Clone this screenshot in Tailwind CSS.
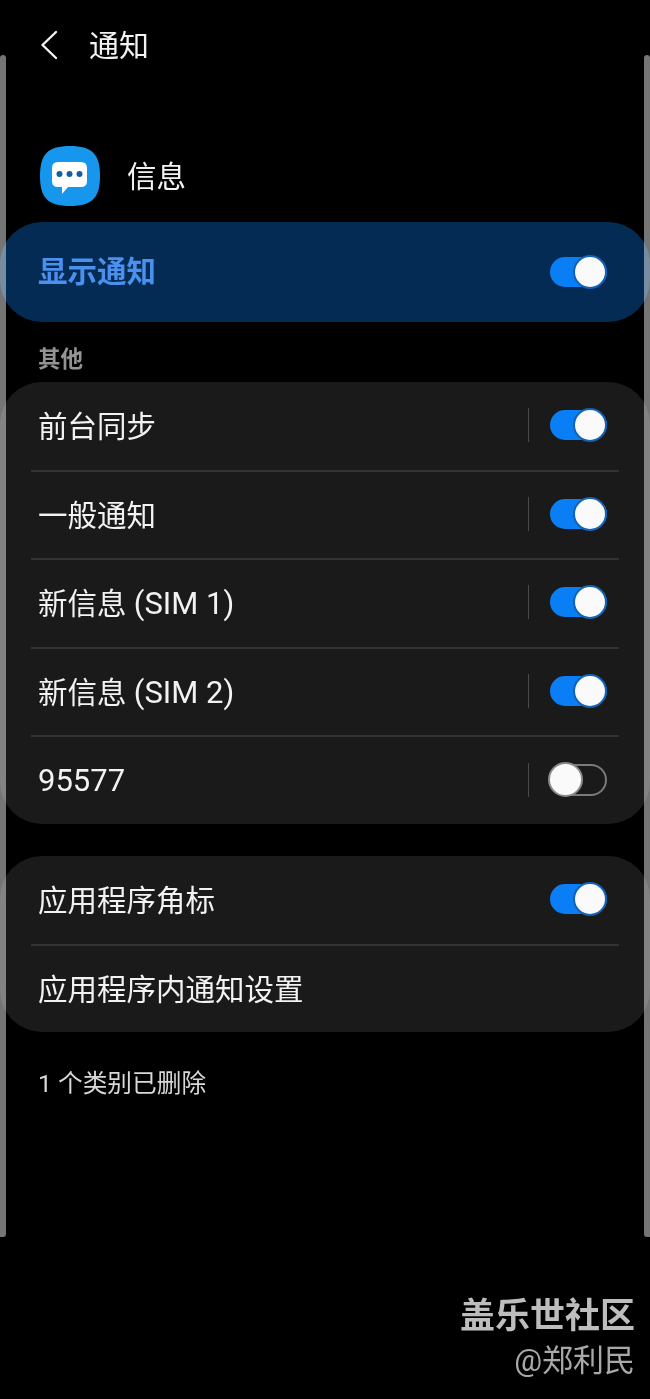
<!DOCTYPE html>
<html lang="zh-CN">
<head>
<meta charset="utf-8" />
<title>通知</title>
<script src="https://cdn.jsdelivr.net/npm/@tailwindcss/browser@4"></script>
</head>
<body class="bg-black">
<div class="relative w-[650px] h-[1399px] overflow-hidden bg-black text-[#f2f2f2] font-['Roboto','Noto_Sans_CJK_SC',sans-serif]">

  <!-- edge bars, the lists screen-blend over them -->
  <div class="absolute left-0 top-[55px] w-[6px] h-[1182px] rounded-t-[3px] rounded-br-[3px] bg-[#757575]"></div>
  <div class="absolute right-0 top-[55px] w-[6px] h-[1182px] rounded-t-[3px] rounded-bl-[3px] bg-[#757575]"></div>

  <!-- header -->
  <header class="flex items-center h-[90px] pl-[40px]">
    <svg class="w-[18px] h-[30px]" viewBox="0 0 18 30" fill="none" stroke="#f2f2f2" stroke-width="2.4" stroke-linecap="round" stroke-linejoin="round"><path d="M16 2 L2.5 15 L16 28"/></svg>
    <h1 class="ml-[31px] pt-[2px] text-[30px] leading-none font-normal">通知</h1>
  </header>

  <!-- app row -->
  <div class="flex items-center h-[60px] mt-[56px] pl-[40px]">
    <svg class="w-[60px] h-[60px]" viewBox="0 0 60 60">
      <path d="M30 0 C52 0 60 8 60 30 C60 52 52 60 30 60 C8 60 0 52 0 30 C0 8 8 0 30 0 Z" fill="#1796ee"/>
      <path d="M18 16 H41 Q47 16 47 22 V35 Q47 41 41 41 H28 L22 48 V41 H18 Q12 41 12 35 V22 Q12 16 18 16 Z" fill="#fff"/>
      <circle cx="19.5" cy="28" r="3" fill="#14609f"/>
      <circle cx="29.5" cy="28" r="3" fill="#14609f"/>
      <circle cx="39.5" cy="28" r="3" fill="#14609f"/>
    </svg>
    <span class="ml-[27px] pt-[4px] text-[29.5px] leading-none">信息</span>
  </div>

  <!-- master switch -->
  <div class="mix-blend-screen flex items-center justify-between h-[100px] mt-[16px] pl-[38px] pr-[43px] rounded-[42px] bg-[#032b53]">
    <span class="text-[29.5px] leading-none font-bold text-[#4a90ee] mt-[2px]">显示通知</span>
    <div class="flex items-center justify-end w-[57px] h-[30px] rounded-full bg-[#0a7ff5]">
      <div class="w-[34px] h-[34px] shrink-0 rounded-full bg-[#fafafa] border-2 border-[#1262b8]"></div>
    </div>
  </div>

  <h2 class="pl-[38px] mt-[25px] text-[22.5px] leading-[24px] font-bold text-[#949494]">其他</h2>

  <!-- channel list -->
  <section class="mix-blend-screen mt-[11px] rounded-[42px] bg-[#1a1a1a] px-[31px]">
    <div class="flex items-center h-[89.5px] pb-[2px] border-b-2 border-[#333333]">
      <span class="flex-1 pl-[7px] pt-[6px] text-[29.5px] leading-none">前台同步</span>
      <div class="w-[1px] h-[34px] bg-[#4a4a4a] mr-[21px]"></div>
      <div class="flex items-center justify-end w-[57px] h-[30px] mr-[12px] rounded-full bg-[#0a7ff5]">
        <div class="w-[34px] h-[34px] shrink-0 rounded-full bg-[#fafafa] border-2 border-[#1262b8]"></div>
      </div>
    </div>
    <div class="flex items-center h-[88.5px] pb-[2px] border-b-2 border-[#333333]">
      <span class="flex-1 pl-[7px] pt-[6px] text-[29.5px] leading-none">一般通知</span>
      <div class="w-[1px] h-[34px] bg-[#4a4a4a] mr-[21px]"></div>
      <div class="flex items-center justify-end w-[57px] h-[30px] mr-[12px] rounded-full bg-[#0a7ff5]">
        <div class="w-[34px] h-[34px] shrink-0 rounded-full bg-[#fafafa] border-2 border-[#1262b8]"></div>
      </div>
    </div>
    <div class="flex items-center h-[88.5px] pb-[2px] border-b-2 border-[#333333]">
      <span class="flex-1 pl-[7px] pt-[3px] text-[29.5px] leading-none">新信息 <span class="text-[31px]">(SIM 1)</span></span>
      <div class="w-[1px] h-[34px] bg-[#4a4a4a] mr-[21px]"></div>
      <div class="flex items-center justify-end w-[57px] h-[30px] mr-[12px] rounded-full bg-[#0a7ff5]">
        <div class="w-[34px] h-[34px] shrink-0 rounded-full bg-[#fafafa] border-2 border-[#1262b8]"></div>
      </div>
    </div>
    <div class="flex items-center h-[88.5px] pb-[2px] border-b-2 border-[#333333]">
      <span class="flex-1 pl-[7px] pt-[4px] text-[29.5px] leading-none">新信息 <span class="text-[31px]">(SIM 2)</span></span>
      <div class="w-[1px] h-[34px] bg-[#4a4a4a] mr-[21px]"></div>
      <div class="flex items-center justify-end w-[57px] h-[30px] mr-[12px] rounded-full bg-[#0a7ff5]">
        <div class="w-[34px] h-[34px] shrink-0 rounded-full bg-[#fafafa] border-2 border-[#1262b8]"></div>
      </div>
    </div>
    <div class="flex items-center h-[87px] pb-[2px]">
      <span class="flex-1 pl-[7px] pt-[2px] text-[31px] leading-none">95577</span>
      <div class="w-[1px] h-[34px] bg-[#4a4a4a] mr-[20px]"></div>
      <div class="flex items-center justify-start w-[58px] h-[32px] mr-[12px] rounded-full border-2 border-[#7a7a7a]">
        <div class="w-[35px] h-[35px] shrink-0 -ml-[3px] rounded-full bg-[#fafafa] border-2 border-[#8a8a8a]"></div>
      </div>
    </div>
  </section>

  <!-- app level settings -->
  <section class="mix-blend-screen mt-[32px] rounded-[42px] bg-[#1a1a1a] px-[31px]">
    <div class="flex items-center h-[90px] pb-[3px] border-b-2 border-[#333333]">
      <span class="flex-1 pl-[7px] pt-[6px] text-[29.5px] leading-none">应用程序角标</span>
      <div class="flex items-center justify-end w-[57px] h-[30px] mr-[12px] rounded-full bg-[#0a7ff5]">
        <div class="w-[34px] h-[34px] shrink-0 rounded-full bg-[#fafafa] border-2 border-[#1262b8]"></div>
      </div>
    </div>
    <div class="flex items-center h-[86px]">
      <span class="flex-1 pl-[7px] pt-[4px] text-[29.5px] leading-none">应用程序内通知设置</span>
    </div>
  </section>

  <p class="pl-[38px] mt-[38px] text-[24.7px] leading-[28px] text-[#d8d8d8]">1 个类别已删除</p>

  <!-- community watermark -->
  <div class="absolute right-[15px] top-[1298px] flex flex-col items-end">
    <span class="text-[35px] leading-[38px] font-bold text-[#bdbdbd]">盖乐世社区</span>
    <span class="mt-[7px] text-[31px] leading-[36px] text-[#a8a8a8]">@郑利民</span>
  </div>
</div>
</body>
</html>
